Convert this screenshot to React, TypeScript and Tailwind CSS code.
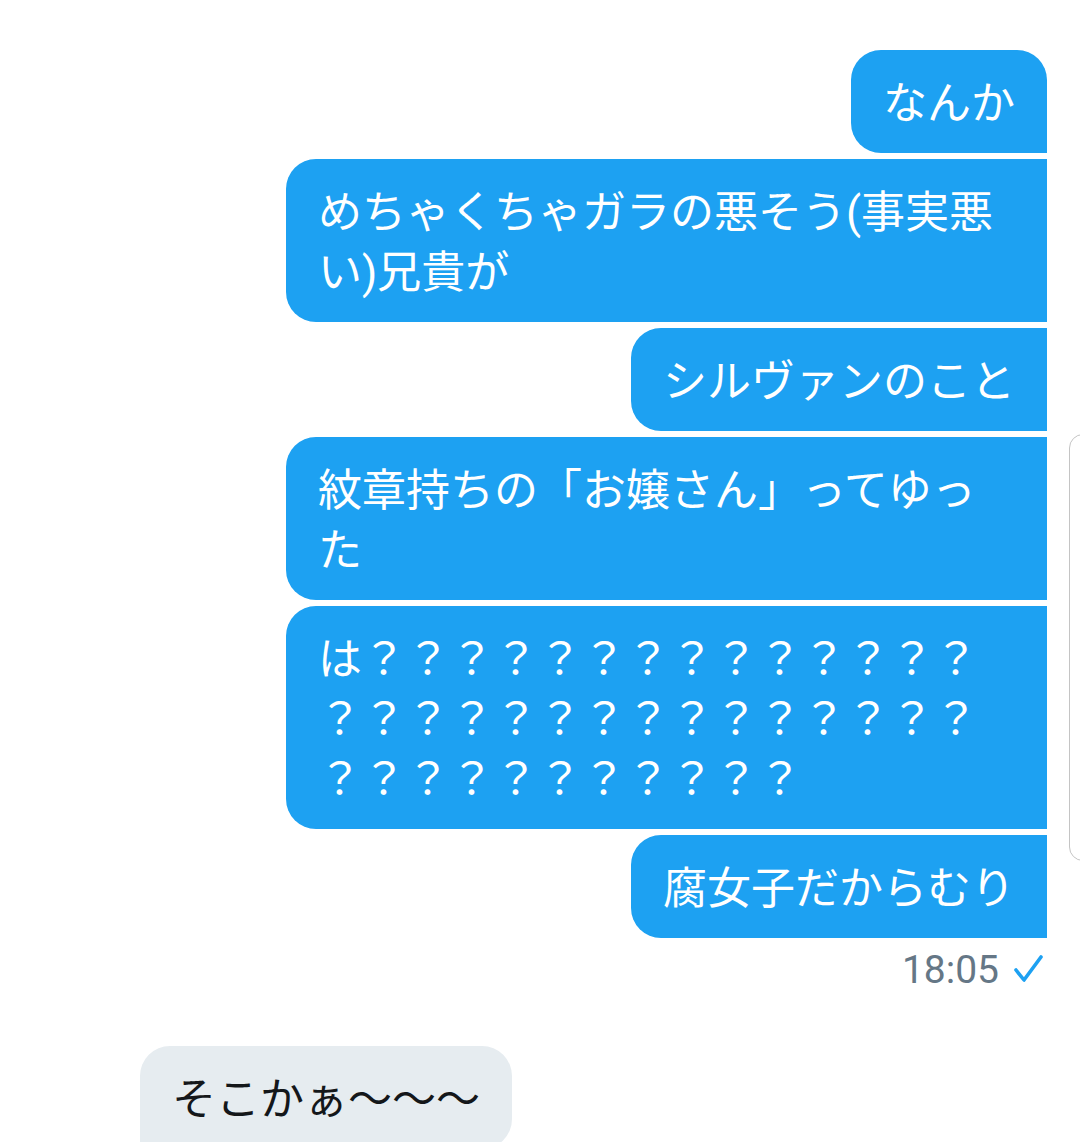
import React from "react";

type Sent = { lines: string[]; first?: boolean; wide?: boolean };

const sent: Sent[] = [
    { lines: ["なんか"], first: true },
    { lines: ["めちゃくちゃガラの悪そう(事実悪", "い)兄貴が"], wide: true },
    { lines: ["シルヴァンのこと"] },
    { lines: ["紋章持ちの「お嬢さん」ってゆっ", "た"], wide: true },
    {
        lines: [
            "は？？？？？？？？？？？？？？",
            "？？？？？？？？？？？？？？？",
            "？？？？？？？？？？？",
        ],
        wide: true,
    },
    { lines: ["腐女子だからむり"] },
];

export default function App() {
    return (
        <div className="relative w-[1080px] h-[1142px] overflow-hidden bg-white font-['Roboto','Noto_Sans_CJK_JP',sans-serif]">
            <div className="flex flex-col pt-[50px] pl-[140px] pr-[33px]">
                {/* 送信メッセージ */}
                <div className="flex flex-col items-end gap-[6px]">
                    {sent.map((m, i) => (
                        <div
                            key={i}
                            className={
                                (m.wide ? "w-[761px] " : "") +
                                (m.first
                                    ? "bg-[#1DA1F2] text-white text-[44px] leading-[60px] px-[32px] pt-[24px] pb-[19px] rounded-[30px] rounded-br-none whitespace-nowrap"
                                    : "bg-[#1DA1F2] text-white text-[44px] leading-[60px] px-[32px] pt-[24px] pb-[19px] rounded-l-[30px] whitespace-nowrap")
                            }
                        >
                            {m.lines.map((l, j) => (
                                <div key={j}>{l}</div>
                            ))}
                        </div>
                    ))}
                </div>

                {/* 時刻 + 既読 */}
                <div className="flex items-center justify-end mt-[8px] pr-[4px]">
                    <span className="text-[39px] leading-[48px] text-[#657786]">18:05</span>
                    <svg width="30" height="30" viewBox="0 0 30 30" className="ml-[14px] -mt-[2px]">
                        <path d="M3 16 L11 26 L28 3" fill="none" stroke="#1DA1F2" strokeWidth="3.6" strokeLinecap="round" strokeLinejoin="round" />
                    </svg>
                </div>

                {/* 受信メッセージ */}
                <div className="flex mt-[52px]">
                    <div className="bg-[#E6ECF0] text-[#14171A] text-[44px] leading-[60px] px-[32px] pt-[24px] pb-[19px] rounded-[30px] rounded-bl-none">
                        そこかぁ〜〜〜
                    </div>
                </div>
            </div>

            {/* スクロールハンドル */}
            <div className="absolute left-[1069px] top-[434px] w-[30px] h-[427px] rounded-[14px] border-[1.5px] border-[#c4c4c4]" />
        </div>
    );
}
